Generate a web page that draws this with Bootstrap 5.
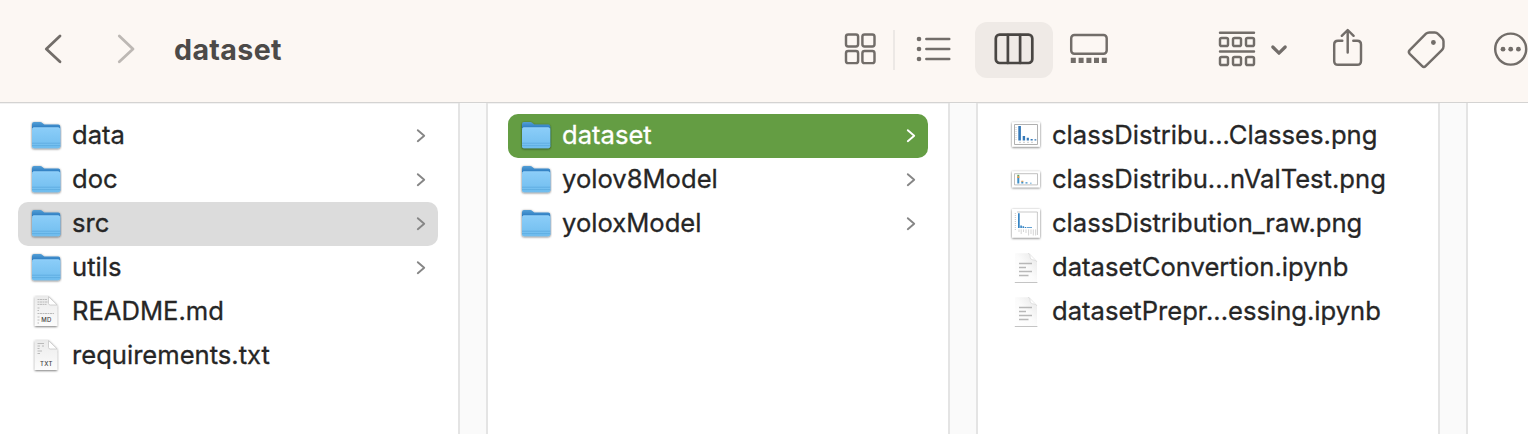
<!DOCTYPE html>
<html lang="en">
<head>
<meta charset="utf-8">
<meta name="viewport" content="width=device-width, initial-scale=1">
<title>dataset</title>
<link href="https://cdn.jsdelivr.net/npm/bootstrap@5.3.0/dist/css/bootstrap.min.css" rel="stylesheet">
<style>
  body { font-family: Inter, "Liberation Sans", sans-serif; height: 434px; color: #262626; background: #fff; }
  svg { display: block; flex: none; }
  .toolbar { height: 103px; background: #fcf7f3; border-bottom: 1px solid #d4d3d2; padding-bottom: 4px; color: #726d69; }
  .toolbar svg { fill: none; stroke: currentColor; stroke-width: 2.45; stroke-linecap: round; stroke-linejoin: round; }
  .toolbar svg .solid { fill: currentColor; stroke: none; }
  .toolbar .nav-arrow { stroke-width: 2.8; }
  .title { font-size: 28.6px; font-weight: 700; color: #4c4a48; letter-spacing: .36px; line-height: 40px; margin: 2px 0 0 34px; width: 661px; }
  .sep { width: 2px; height: 40px; background: #ece8e5; margin: 2px 18px 0 17px; }
  .active-view { width: 78px; height: 56px; border-radius: 12px; background: #efeae6; color: #494643; margin: 2px 12px 0 19px; }
  .pane { width: 460px; padding: 11px 20px 0; box-shadow: inset 0 1px #f2f2f2; }
  .pane:first-child { width: 458px; padding-left: 18px; }
  .gutter { width: 30px; border: solid #e4e4e4; border-width: 0 2px; background: #fafafa; }
  .entry { height: 44px; border-radius: 10px; padding: 0 11px 0 12px; font-size: 25.6px; line-height: 44px; white-space: nowrap; }
  .entry .label { margin-left: 10px; padding-bottom: 2px; -webkit-text-stroke: .3px currentColor; }
  .entry .arrow { fill: none; stroke: #868686; stroke-width: 1.9; stroke-linecap: round; stroke-linejoin: round; }
  .current-parent { background: #dcdcdc; }
  .chosen { background: #649d43; color: #fff; }
  .chosen .arrow { stroke: #fff; }
  .kind { font: 500 6px Inter, sans-serif; letter-spacing: .3px; fill: #444; }
</style>
</head>
<body class="d-flex flex-column overflow-hidden">
<svg width="0" height="0" class="position-absolute">
  <defs>
    <linearGradient id="front" x1="0" y1="0" x2="0" y2="1"><stop offset="0" stop-color="#8bcdf8"/><stop offset="1" stop-color="#70bdee"/></linearGradient>
    <linearGradient id="back" x1="0" y1="3" x2="0" y2="10" gradientUnits="userSpaceOnUse"><stop offset="0" stop-color="#549fd6"/><stop offset="1" stop-color="#2575bd"/></linearGradient>
    <linearGradient id="paper" x1="0" y1="0" x2="0" y2="1"><stop offset="0" stop-color="#ebebeb"/><stop offset="1" stop-color="#fcfcfc"/></linearGradient>
    <linearGradient id="sheetfill" x1="1" y1="0" x2="0" y2="1"><stop offset="0" stop-color="#e6e6e6"/><stop offset=".5" stop-color="#fbfbfb"/><stop offset="1" stop-color="#fff"/></linearGradient>
    <filter id="soft" x="-20%" y="-20%" width="140%" height="140%"><feDropShadow dx="0" dy=".7" stdDeviation=".8" flood-opacity=".6"/></filter>
    <symbol id="folder" viewBox="0 0 32 34">
      <g filter="url(#soft)">
        <path d="M2 5.2Q2 3.1 4 3.1H10.2Q11.5 3.1 12.3 3.9L13.6 5.1Q14.2 5.6 15.2 5.6H28.3Q30.2 5.6 30.2 7.4V28H2Z" fill="url(#back)"/>
        <path d="M2 10.6Q2 8.8 3.8 8.8H28.4Q30.2 8.8 30.2 10.6V27.4Q30.2 29.2 28.4 29.2H3.8Q2 29.2 2 27.4Z" fill="url(#front)"/>
      </g>
      <path d="M2.3 9.6Q2.7 8.7 4 8.7H28.2Q29.5 8.7 29.9 9.6" fill="none" stroke="#a4dcff" stroke-width=".7"/>
      <path d="M2 24.2H30.2M2 26.6H30.2" stroke="#58a7dc" stroke-width=".7"/>
    </symbol>
    <symbol id="chev" viewBox="0 0 12 16"><path d="M2.8 2.2 9.2 7.7 2.8 13.2"/></symbol>
    <symbol id="page" viewBox="0 0 32 34">
      <g filter="url(#soft)"><path d="M4.8 1.6H18.5L27.2 10V31H4.8Z" fill="url(#paper)"/></g>
      <path d="M18.5 1.6V8.4Q18.5 10 20.3 10H27.2Z" fill="#fff" stroke="#c0c0c0" stroke-width=".7"/>
    </symbol>
    <symbol id="sheet" viewBox="0 0 32 34">
      <path d="M5 2.2H19.5L27 10V31.2H5Z" fill="url(#sheetfill)"/>
      <path d="M18 2.2C20.8 3 19.6 6.5 20.8 8C22.2 9.4 26 8.4 27 11" fill="#fff" stroke="#dadada" stroke-width=".8"/>
      <path d="M4.8 31.5H27.4" stroke="#c4c4c4" stroke-width="1"/>
      <path d="M9 12.5H22M9 16.5H16M9 20.5H22M9 24.5H18.5" stroke="#b8b8b8" stroke-width="1.5"/>
    </symbol>
  </defs>
</svg>

<header class="toolbar d-flex align-items-center flex-shrink-0">
  <svg class="nav-arrow" width="28" height="32" viewBox="40 33 28 32" style="margin-left:40px"><path d="M60 36 46.3 49 60 61.7"/></svg>
  <svg class="nav-arrow" width="28" height="32" viewBox="112 33 28 32" style="margin-left:44px;color:#bdb8b4"><path d="M119.3 36 133 49 119.3 61.7"/></svg>
  <div class="title">dataset</div>
  <svg width="41" height="40" viewBox="835 29 41 40"><rect x="846" y="34.4" width="12.1" height="12.1" rx="2.2"/><rect x="862.4" y="34.4" width="12.1" height="12.1" rx="2.2"/><rect x="846" y="51" width="12.1" height="12.1" rx="2.2"/><rect x="862.4" y="51" width="12.1" height="12.1" rx="2.2"/></svg>
  <div class="sep"></div>
  <svg width="43" height="40" viewBox="913 29 43 40"><g class="solid"><circle cx="919" cy="39" r="2.3"/><circle cx="919" cy="49" r="2.3"/><circle cx="919" cy="59" r="2.3"/></g><path d="M926.3 39H949.3M926.3 49H949.3M926.3 59H949.3"/></svg>
  <div class="active-view d-flex align-items-center justify-content-center">
    <svg width="42" height="34" viewBox="993.5 33 42 34" style="stroke-width:2.7"><rect x="996.3" y="34.7" width="36.5" height="28.3" rx="3.8"/><path d="M1008.4 35V63M1020.6 35V63"/></svg>
  </div>
  <svg width="50" height="40" viewBox="1065 29 50 40"><rect x="1071.2" y="35" width="35.5" height="18.8" rx="3.2"/><path class="solid" d="M1070.8 57.7h5v5.3h-5zM1078.6 57.7h5v5.3h-5zM1086.4 57.7h5v5.3h-5zM1094 57.7h5v5.3h-5zM1101.8 57.7h5v5.3h-5z"/></svg>
  <svg width="78" height="40" viewBox="1215 29 78 40" style="margin-left:100px"><path d="M1220 32.7H1254M1220 51.4H1254"/><g><rect x="1220" y="38" width="8" height="8" rx="1.6"/><rect x="1233" y="38" width="8" height="8" rx="1.6"/><rect x="1246" y="38" width="8" height="8" rx="1.6"/><rect x="1220" y="57" width="8" height="8" rx="1.6"/><rect x="1233" y="57" width="8" height="8" rx="1.6"/><rect x="1246" y="57" width="8" height="8" rx="1.6"/></g><path d="M1272.8 47 1279 53.2 1285.2 47" stroke-width="3.2"/></svg>
  <svg width="40" height="44" viewBox="1328 27 40 44" style="margin-left:35px"><path d="M1342.3 40.7H1338Q1334.2 40.7 1334.2 44.5V61Q1334.2 64.8 1338 64.8H1357.2Q1361 64.8 1361 61V44.5Q1361 40.7 1357.2 40.7H1353.3M1347.7 52.4V30.4M1341.8 35.8 1347.7 30 1353.6 35.8"/></svg>
  <svg width="44" height="44" viewBox="1404 27 44 44" style="margin-left:36px"><path d="M1426 33.7Q1427.4 32.4 1429.3 32.4H1434.8Q1436.7 32.4 1438 33.8L1442 37.8Q1443.5 39.3 1443.5 41.2V46.6Q1443.5 48.4 1442.1 49.8L1425.6 66.2Q1423.9 67.9 1422.2 66.2L1409.7 53.8Q1408 52 1409.7 50.2Z"/><circle class="solid" cx="1433.4" cy="42.5" r="2.4"/></svg>
  <svg width="36" height="40" viewBox="1492 29 36 40" style="margin-left:44px"><circle cx="1510.7" cy="49.1" r="15.5"/><g class="solid"><circle cx="1503" cy="49.2" r="2.4"/><circle cx="1510.7" cy="49.2" r="2.4"/><circle cx="1518.4" cy="49.2" r="2.4"/></g></svg>
</header>

<main class="d-flex flex-grow-1">
  <section class="pane flex-shrink-0">
    <div class="entry d-flex align-items-center"><svg width="32" height="34"><use href="#folder"/></svg><span class="label">data</span><svg class="arrow ms-auto" width="12" height="16"><use href="#chev"/></svg></div>
    <div class="entry d-flex align-items-center"><svg width="32" height="34"><use href="#folder"/></svg><span class="label">doc</span><svg class="arrow ms-auto" width="12" height="16"><use href="#chev"/></svg></div>
    <div class="entry current-parent d-flex align-items-center"><svg width="32" height="34"><use href="#folder"/></svg><span class="label">src</span><svg class="arrow ms-auto" width="12" height="16"><use href="#chev"/></svg></div>
    <div class="entry d-flex align-items-center"><svg width="32" height="34"><use href="#folder"/></svg><span class="label">utils</span><svg class="arrow ms-auto" width="12" height="16"><use href="#chev"/></svg></div>
    <div class="entry d-flex align-items-center"><svg width="32" height="34"><use href="#page"/><path d="M7.5 4.5H17M7.5 7H18M7.5 9.4H16.5M7.5 13H10M7.5 15.5H9M7.5 18.5H24M7.5 22H10M7.5 25H9.5M7.5 28H9" stroke="#b4b4b4" stroke-width=".9" stroke-dasharray="2 .5"/><text class="kind" x="16.4" y="27" text-anchor="middle">MD</text></svg><span class="label">README.md</span></div>
    <div class="entry d-flex align-items-center"><svg width="32" height="34"><use href="#page"/><path d="M7.5 4.5H14M7.5 7H10M12 7H14M7.5 9.5H9.5M7.5 12H12M7.5 14.5H10" stroke="#b4b4b4" stroke-width=".9"/><text class="kind" x="16.4" y="27" text-anchor="middle">TXT</text></svg><span class="label">requirements.txt</span></div>
  </section>
  <div class="gutter flex-shrink-0"></div>
  <section class="pane flex-shrink-0">
    <div class="entry chosen d-flex align-items-center"><svg width="32" height="34"><use href="#folder"/></svg><span class="label">dataset</span><svg class="arrow ms-auto" width="12" height="16"><use href="#chev"/></svg></div>
    <div class="entry d-flex align-items-center"><svg width="32" height="34"><use href="#folder"/></svg><span class="label">yolov8Model</span><svg class="arrow ms-auto" width="12" height="16"><use href="#chev"/></svg></div>
    <div class="entry d-flex align-items-center"><svg width="32" height="34"><use href="#folder"/></svg><span class="label">yoloxModel</span><svg class="arrow ms-auto" width="12" height="16"><use href="#chev"/></svg></div>
  </section>
  <div class="gutter flex-shrink-0"></div>
  <section class="pane flex-shrink-0">
    <div class="entry d-flex align-items-center"><svg width="32" height="34"><g filter="url(#soft)"><path d="M2 3.3H30V27.7H2Z" fill="#fff"/></g><path d="M4.5 5.5H27.5V25.5H4.5Z" fill="none" stroke="#b0b0b0"/><path d="M6 8V21" stroke="#ccc" stroke-dasharray="1 1"/><path d="M8.3 7h2.6v14.5H8.3zM12.7 17h2.4v4.5h-2.4zM16.7 18.7h2.2v2.8h-2.2zM20.6 20h2.1v1.5h-2.1zM24.5 20.3h1.8v1.2h-1.8z" fill="#3478b8"/><path d="M9 23.3H25" stroke="#ccc" stroke-dasharray="2 2"/></svg><span class="label">classDistribu...Classes.png</span></div>
    <div class="entry d-flex align-items-center"><svg width="32" height="34"><g filter="url(#soft)"><path d="M2 8.3H30V24.3H2Z" fill="#fff"/></g><path d="M4.5 10.7H27.5V21.9H4.5Z" fill="none" stroke="#b0b0b0" stroke-width=".8"/><path d="M7.3 13.5h2v7h-2zM11.3 18.5h2v2h-2zM15.5 19.3h2v1.2h-2zM20 19.8h1.6v.7H20z" fill="#3f8fc8"/><path d="M7.3 11.8h2v1.5h-2z" fill="#60aa5e"/><path d="M7.3 13.2h2v1.8h-2zM11.3 17.8h2v1h-2z" fill="#e89840"/></svg><span class="label">classDistribu...nValTest.png</span></div>
    <div class="entry d-flex align-items-center"><svg width="32" height="34"><g filter="url(#soft)"><path d="M2 2H30V30.6H2Z" fill="#fff"/></g><path d="M7 5H27.4V28" fill="none" stroke="#bbb" stroke-width=".8"/><path d="M5.3 6V23" stroke="#c4c4c4" stroke-dasharray="1 1"/><path d="M8 6.3h1.7v14.7H8zM10.3 18.6h1.6v2.4h-1.6zM12.5 19.3h1.6v1.7h-1.6zM14.8 19.9h1.5v1.1h-1.5zM17 20.3h5v.7h-5z" fill="#3584c4"/><path d="M9 22.4V25M11.2 22.4V27M13.5 22.4V25M16 22.4V26M18.6 22.4V28.5M21 22.4V27M23.3 22.4V28.5M25.6 22.4V28.5" stroke="#d0d0d0" stroke-width=".9"/></svg><span class="label">classDistribution_raw.png</span></div>
    <div class="entry d-flex align-items-center"><svg width="32" height="34"><use href="#sheet"/></svg><span class="label">datasetConvertion.ipynb</span></div>
    <div class="entry d-flex align-items-center"><svg width="32" height="34"><use href="#sheet"/></svg><span class="label">datasetPrepr...essing.ipynb</span></div>
  </section>
  <div class="gutter flex-shrink-0"></div>
  <section class="flex-grow-1"></section>
</main>
<script src="https://cdn.jsdelivr.net/npm/bootstrap@5.3.0/dist/js/bootstrap.bundle.min.js"></script>
</body>
</html>
